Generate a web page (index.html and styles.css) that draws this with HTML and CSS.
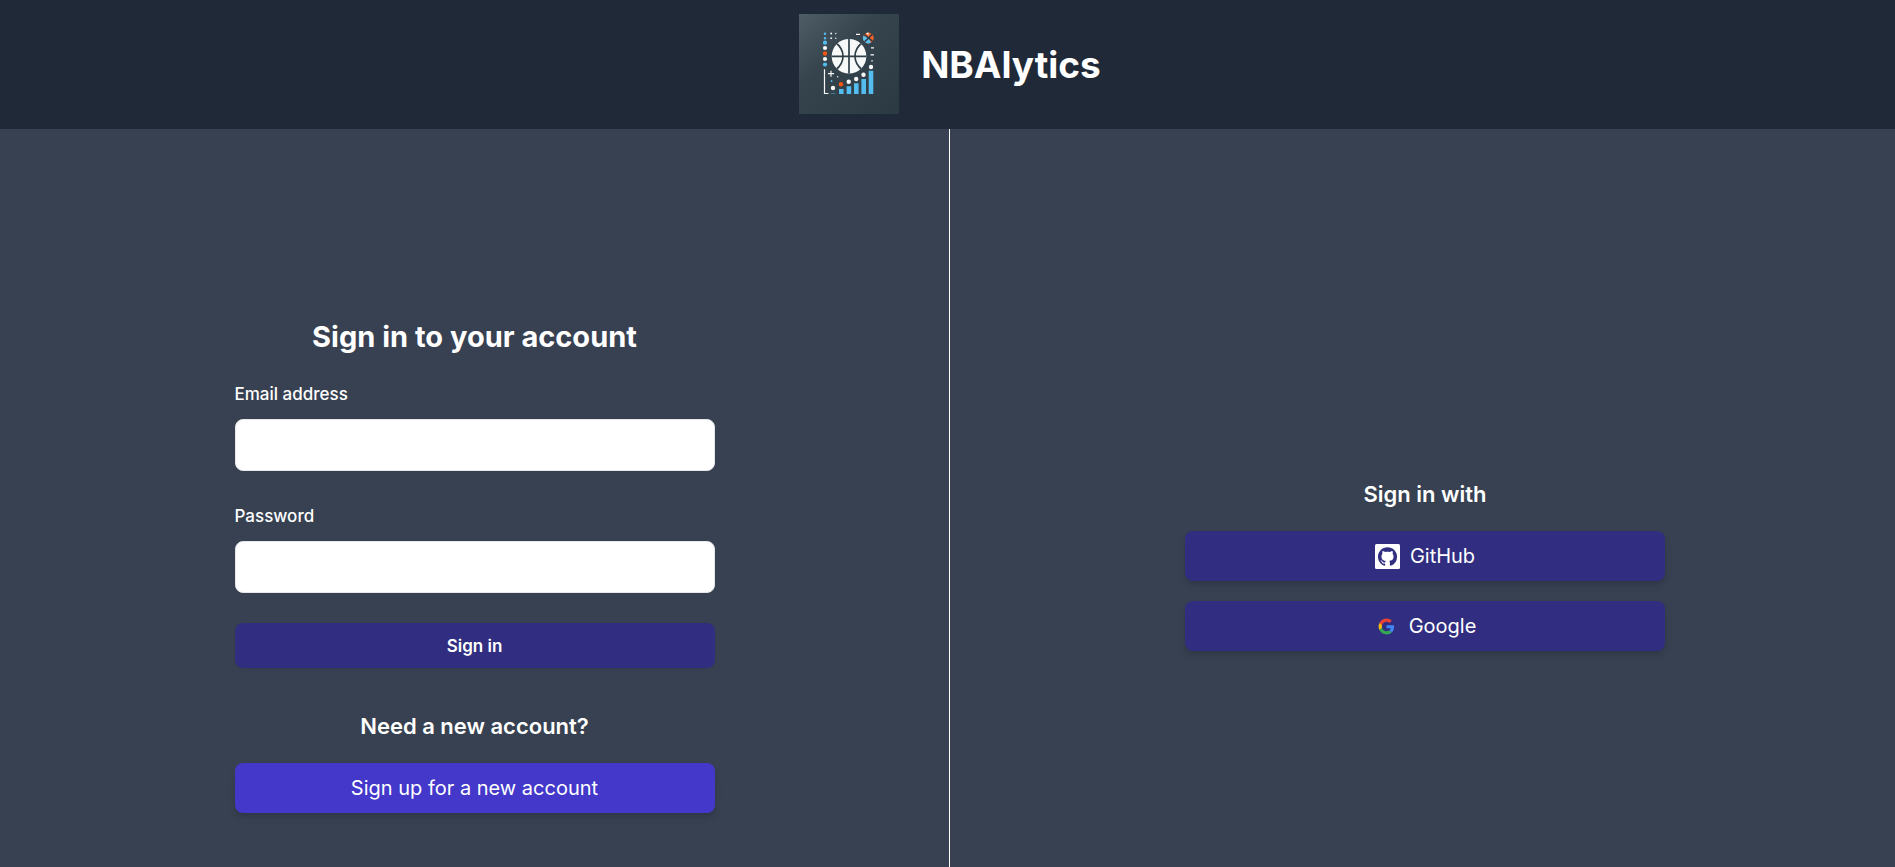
FILE: index.html
```html
<!DOCTYPE html>
<html lang="en">
<head>
<meta charset="utf-8">
<meta name="viewport" content="width=device-width, initial-scale=1">
<title>NBAlytics</title>
<link rel="stylesheet" href="styles.css">
</head>
<body>
<div class="page">
  <header class="header">
    <svg class="logo" viewBox="0 0 100 100" role="img" aria-label="NBAlytics logo">
      <defs>
        <linearGradient id="tile" x1="0" y1="0" x2="0.9" y2="1">
          <stop offset="0" stop-color="#4f5d66"/>
          <stop offset="0.4" stop-color="#35444d"/>
          <stop offset="1" stop-color="#2b3a43"/>
        </linearGradient>
        <clipPath id="ball"><circle cx="50" cy="42.3" r="17.3"/></clipPath>
        <clipPath id="mini"><circle cx="69.3" cy="24" r="5.4"/></clipPath>
      </defs>
      <rect width="100" height="100" fill="url(#tile)"/>
      <g clip-path="url(#ball)">
        <rect x="32" y="24" width="36" height="37" fill="#f7f8f8"/>
        <g fill="none" stroke="#2f3f48" stroke-width="1.7">
          <path d="M50 24v37M32 42.3h36"/>
          <path d="M36.5 28.5C46.5 36 46.5 48.5 36.5 56M63.5 28.5C53.5 36 53.5 48.5 63.5 56"/>
        </g>
      </g>
      <g clip-path="url(#mini)">
        <rect x="63" y="18" width="13" height="12" fill="#f1622b"/>
        <path d="M63 21l6.3 3-3 6.5H63zM69.3 24l3.5 6h-7z" fill="#58bfee"/>
        <path d="M65.5 17.5h4v4z" fill="#f4f4f4"/>
        <path d="M64 19.5l11 9M74.5 19l-10 10" fill="none" stroke="#2b3a43" stroke-width="1.5"/>
      </g>
      <g fill="#54bdf0">
        <circle cx="26" cy="19.7" r="1.2"/><circle cx="26" cy="24.2" r="1.2"/>
        <circle cx="26" cy="28.7" r="2.1"/><circle cx="26" cy="50.5" r="2.1"/>
        <circle cx="32.6" cy="67" r="0.9"/>
        <path d="M40 75h4.6v5H40zM47.6 72.3h4.6V80h-4.6zM55 69.3h4.6V80H55zM62.4 65H67v15h-4.6zM69.7 56.7h4.6V80h-4.6z"/>
        <path d="M32 79h4.5v1H32z" opacity="0.5"/>
      </g>
      <g fill="#f7f8f8">
        <circle cx="26" cy="34" r="2.1"/><circle cx="26" cy="45" r="2.1"/>
        <circle cx="32.2" cy="19.5" r="0.9"/><circle cx="32.2" cy="24.2" r="0.9"/>
        <circle cx="36.8" cy="19.5" r="0.7"/><circle cx="36.8" cy="24.2" r="0.7"/>
        <circle cx="38.7" cy="62.7" r="0.7"/>
        <circle cx="34" cy="74" r="2.2"/><circle cx="49.7" cy="67.7" r="2.2"/>
        <circle cx="57.2" cy="65" r="2.2"/><circle cx="64.5" cy="60.7" r="2.2"/>
        <circle cx="72" cy="53" r="2.2"/>
        <path d="M57 19.7h4v1.4h-4zM72 33.3h3v1.3h-3zM71.5 40.3h3.5v1.3h-3.5zM72.3 46.2h1.5v1.3h-1.5z"/>
      </g>
      <path d="M25.5 55.3v24.2h4M32 56.7v6M29 59.7h6" fill="none" stroke="#f7f8f8" stroke-width="1.2"/>
      <circle cx="26" cy="39.5" r="2.2" fill="#f4570f"/>
      <circle cx="42" cy="70.3" r="2.2" fill="#f4570f"/>
    </svg>
    <h1 class="brand">NBAlytics</h1>
  </header>
  <main class="columns">
    <section class="column column-account">
      <div class="panel">
        <h2 class="title">Sign in to your account</h2>
        <form class="form">
          <div class="field">
            <label class="label" for="email">Email address</label>
            <input class="input" id="email" name="email" type="email" autocomplete="email">
          </div>
          <div class="field">
            <label class="label" for="password">Password</label>
            <input class="input" id="password" name="password" type="password" autocomplete="current-password">
          </div>
          <button class="submit" type="submit">Sign in</button>
        </form>
        <h3 class="subtitle subtitle-signup">Need a new account?</h3>
        <button class="action action-signup" type="button">Sign up for a new account</button>
      </div>
    </section>
    <section class="column column-providers">
      <div class="panel">
        <h3 class="subtitle">Sign in with</h3>
        <div class="providers">
          <button class="action" type="button">
            <svg class="icon" viewBox="0 0 25 25" aria-hidden="true">
              <rect width="25" height="25" rx="1.5" fill="#fff"/>
              <path transform="translate(3 3.2) scale(1.19)" fill="#312e81" d="M8 0C3.58 0 0 3.58 0 8c0 3.54 2.29 6.53 5.47 7.59.4.07.55-.17.55-.38 0-.19-.01-.82-.01-1.49-2.01.37-2.53-.49-2.69-.94-.09-.23-.48-.94-.82-1.13-.28-.15-.68-.52-.01-.53.63-.01 1.08.58 1.23.82.72 1.21 1.87.87 2.33.66.07-.52.28-.87.51-1.07-1.78-.2-3.64-.89-3.64-3.95 0-.87.31-1.59.82-2.15-.08-.2-.36-1.02.08-2.12 0 0 .67-.21 2.2.82.64-.18 1.32-.27 2-.27.68 0 1.36.09 2 .27 1.53-1.04 2.2-.82 2.2-.82.44 1.1.16 1.92.08 2.12.51.56.82 1.27.82 2.15 0 3.07-1.87 3.75-3.65 3.95.29.25.54.73.54 1.48 0 1.07-.01 1.93-.01 2.2 0 .21.15.46.55.38A8.013 8.013 0 0 0 16 8c0-4.42-3.58-8-8-8z"/>
            </svg>
            GitHub
          </button>
          <button class="action" type="button">
            <svg class="icon" viewBox="-14 -14 76 76" aria-hidden="true">
              <path fill="#EA4335" d="M24 9.5c3.54 0 6.71 1.22 9.21 3.6l6.85-6.85C35.9 2.38 30.47 0 24 0 14.62 0 6.51 5.38 2.56 13.22l7.98 6.19C12.43 13.72 17.74 9.5 24 9.5z"/>
              <path fill="#4285F4" d="M46.98 24.55c0-1.57-.15-3.09-.38-4.55H24v9.02h12.94c-.58 2.96-2.26 5.48-4.78 7.18l7.73 6c4.51-4.18 7.09-10.36 7.09-17.65z"/>
              <path fill="#FBBC05" d="M10.53 28.59c-.48-1.45-.76-2.99-.76-4.59s.27-3.14.76-4.59l-7.98-6.19C.92 16.46 0 20.12 0 24c0 3.88.92 7.54 2.56 10.78l7.97-6.19z"/>
              <path fill="#34A853" d="M24 48c6.48 0 11.93-2.13 15.89-5.81l-7.73-6c-2.15 1.45-4.92 2.3-8.16 2.3-6.26 0-11.57-4.22-13.47-9.91l-7.98 6.19C6.51 42.62 14.62 48 24 48z"/>
            </svg>
            Google
          </button>
        </div>
      </div>
    </section>
  </main>
</div>
</body>
</html>
```
FILE: styles.css
```css
* {
  box-sizing: border-box;
}

body {
  margin: 0;
  overflow-x: hidden;
  background: #374151;
  color: #fff;
  font-family: Inter, "Liberation Sans", sans-serif;
}

h1,
h2,
h3 {
  margin: 0;
}

/* The page runs slightly under the scrollbar edge. */
.page {
  display: flex;
  flex-direction: column;
  min-height: 100vh;
  margin-right: -5px;
}

.header {
  display: flex;
  align-items: center;
  justify-content: center;
  gap: 22px;
  padding: 14px 20px 15px;
  background: #1f2937;
}

.logo {
  width: 100px;
  height: 100px;
}

.brand {
  font-size: 37px;
  font-weight: 700;
  line-height: 45px;
}

.columns {
  display: grid;
  grid-template-columns: 1fr 1fr;
  flex: 1;
}

.column {
  display: flex;
  justify-content: center;
  align-items: flex-start;
}

.column-account {
  padding: 185px 20px 50px;
  border-right: 1px solid #fff;
}

.column-providers {
  padding: 347px 20px 50px;
}

.panel {
  width: 100%;
  max-width: 480px;
}

.title {
  margin-bottom: 20px;
  font-size: 29px;
  font-weight: 700;
  line-height: 45px;
  text-align: center;
}

.form {
  display: flex;
  flex-direction: column;
  gap: 30px;
}

.field {
  display: flex;
  flex-direction: column;
  gap: 10px;
}

.label {
  font-size: 17px;
  font-weight: 500;
  line-height: 30px;
}

.input {
  width: 100%;
  height: 52px;
  padding: 8px 12px;
  border: 1px solid #e5e7eb;
  border-radius: 8px;
  background: #fff;
  color: #111827;
  font: inherit;
}

.submit {
  height: 45px;
  border: 0;
  border-radius: 8px;
  background: #312e81;
  box-shadow: 0 1px 3px rgb(0 0 0 / 5%);
  color: #fff;
  font: inherit;
  font-size: 17px;
  font-weight: 600;
}

.subtitle {
  margin-bottom: 20px;
  font-size: 22px;
  font-weight: 600;
  line-height: 36px;
  text-align: center;
}

.column-account .subtitle,
.column-providers .subtitle {
  margin-bottom: 19px;
}

.column-account .subtitle-signup {
  margin-top: 40px;
}

.providers {
  display: flex;
  flex-direction: column;
  gap: 20px;
}

.action {
  display: flex;
  align-items: center;
  justify-content: center;
  gap: 10px;
  width: 100%;
  height: 50px;
  border: 0;
  border-radius: 8px;
  background: #312e81;
  box-shadow: 0 5px 8px -1px rgb(0 0 0 / 10%), 0 3px 5px -2px rgb(0 0 0 / 10%);
  color: #fff;
  font: inherit;
  font-size: 20px;
}

.action-signup {
  background: #4338ca;
}

.icon {
  width: 25px;
  height: 25px;
}
```
